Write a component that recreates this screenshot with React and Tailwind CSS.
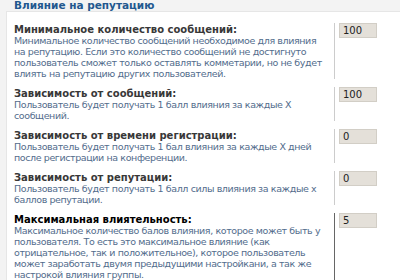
import React from 'react';

const rows = [
  {
    title: 'Минимальное количество сообщений:',
    lines: [
      'Минимальное количество сообщений необходимое для влияния',
      'на репутацию. Если это количество сообщений не достигнуто',
      'пользователь сможет только оставлять комметарии, но не будет',
      'влиять на репутацию других пользователей.',
    ],
    value: '100',
  },
  {
    title: 'Зависимость от сообщений:',
    lines: ['Пользователь будет получать 1 балл влияния за каждые X', 'сообщений.'],
    value: '100',
  },
  {
    title: 'Зависимость от времени регистрации:',
    lines: ['Пользователь будет получать 1 бал влияния за каждые X дней', 'после регистрации на конференции.'],
    value: '0',
  },
  {
    title: 'Зависимость от репутации:',
    lines: ['Пользователь будет получать 1 балл силы влияния за каждые х', 'баллов репутации.'],
    value: '0',
  },
  {
    title: 'Максимальная влиятельность:',
    lines: [
      'Максимальное количество балов влияния, которое может быть у',
      'пользователя. То есть это максимальное влияние (как',
      'отрицательное, так и положительное), которое пользователь',
      'может заработать двумя предыдущими настройкани, а так же',
      'настрокой влияния группы.',
    ],
    value: '5',
    active: true,
  },
];

export default function App() {
  return (
    <div
      className="w-[400px] h-[280px] overflow-hidden bg-[#f3f3f3] text-[10px] leading-[11px]"
      style={{ fontFamily: '"DejaVu Sans", Verdana, sans-serif' }}
    >
      {/* Legend */}
      <div className="h-[11px] pl-[14px] text-[10.5px] leading-[11px] font-bold text-[#22588f]">
        Влияние на репутацию
      </div>

      {/* Panel */}
      <div className="ml-[6px] h-full bg-white border-l border-t border-[#e6e6e6] pt-[11px] pl-[7px]">
        {rows.map((row, i) => (
          <div key={i} className="flex mb-[8px]">
            <div className="w-[320px] shrink-0 pr-[6px] pt-[1px] whitespace-nowrap">
              <div className={`font-bold ${row.active ? 'text-black' : 'text-[#383838]'}`}>
                {row.title}
              </div>
              {row.lines.map((l, j) => (
                <div key={j} className="text-[#526c8c] text-[9.5px] tracking-[-0.4px]">{l}</div>
              ))}
            </div>
            <div className={`border-l ${row.active ? 'border-[#666666]' : 'border-[#cccccc]'} pl-[4px]`}>
              <div className="w-[38px] h-[15px] bg-[#e4e0d9] border border-[#d2cec6] pl-[3px] pt-[1px] text-[#222]">
                {row.value}
              </div>
            </div>
          </div>
        ))}
      </div>
    </div>
  );
}
